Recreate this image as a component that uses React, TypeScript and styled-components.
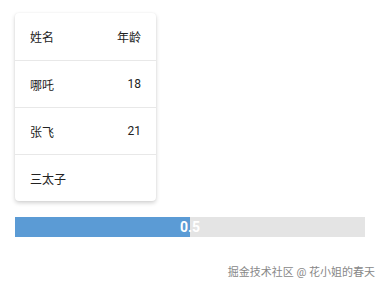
import { FunctionComponent } from 'react';
import styled, { createGlobalStyle } from 'styled-components';

const rows = [
  { name: '哪吒', age: '18' },
  { name: '张飞', age: '21' },
  { name: '三太子', age: '' },
];

const App: FunctionComponent = () => {
  const progress = 0.5;

  return (
    <>
      <GlobalStyle />
      <Root>
        <Card>
          <Row>
            <Cell>姓名</Cell>
            <Cell>年龄</Cell>
          </Row>
          {rows.map((row) => (
            <Row key={row.name}>
              <Cell>{row.name}</Cell>
              <Cell>{row.age}</Cell>
            </Row>
          ))}
        </Card>
        <Progress>
          <Fill style={{ width: `${progress * 100}%` }} />
          <Label>{progress}</Label>
        </Progress>
        <Watermark>掘金技术社区 @ 花小姐的春天</Watermark>
      </Root>
    </>
  );
};

export default App;

const GlobalStyle = createGlobalStyle`
  body {
    margin: 0;
    background: #fff;
    font-family: Roboto, "Noto Sans CJK SC", sans-serif;
  }
`;

const Root = styled.div`
  display: flex;
  flex-direction: column;
  padding: 13px 17px 0 15px;
  height: 285px;
  box-sizing: border-box;
`;

const Card = styled.div`
  width: 141px;
  border-radius: 4px;
  background: #fff;
  box-shadow: 0 2px 4px rgba(0, 0, 0, 0.18), 0 0 2px rgba(0, 0, 0, 0.06);
`;

const Row = styled.div`
  display: flex;
  justify-content: space-between;
  align-items: center;
  height: 47px;
  padding: 0 15px;
  border-top: 1px solid #e8e8e8;
  box-sizing: border-box;

  &:first-child {
    border-top: none;
  }
`;

const Cell = styled.span`
  font-size: 12px;
  color: #222;
`;

const Progress = styled.div`
  position: relative;
  display: flex;
  margin-top: 16px;
  height: 20px;
  background: #e4e4e4;
`;

const Fill = styled.div`
  background: #5b9bd5;
`;

const Label = styled.span`
  position: absolute;
  inset: 0;
  display: flex;
  align-items: center;
  justify-content: center;
  color: #fff;
  font-size: 14px;
  font-weight: bold;
`;

const Watermark = styled.div`
  align-self: flex-end;
  margin-top: 26px;
  margin-right: -10px;
  font-size: 11px;
  color: #888;
`;
